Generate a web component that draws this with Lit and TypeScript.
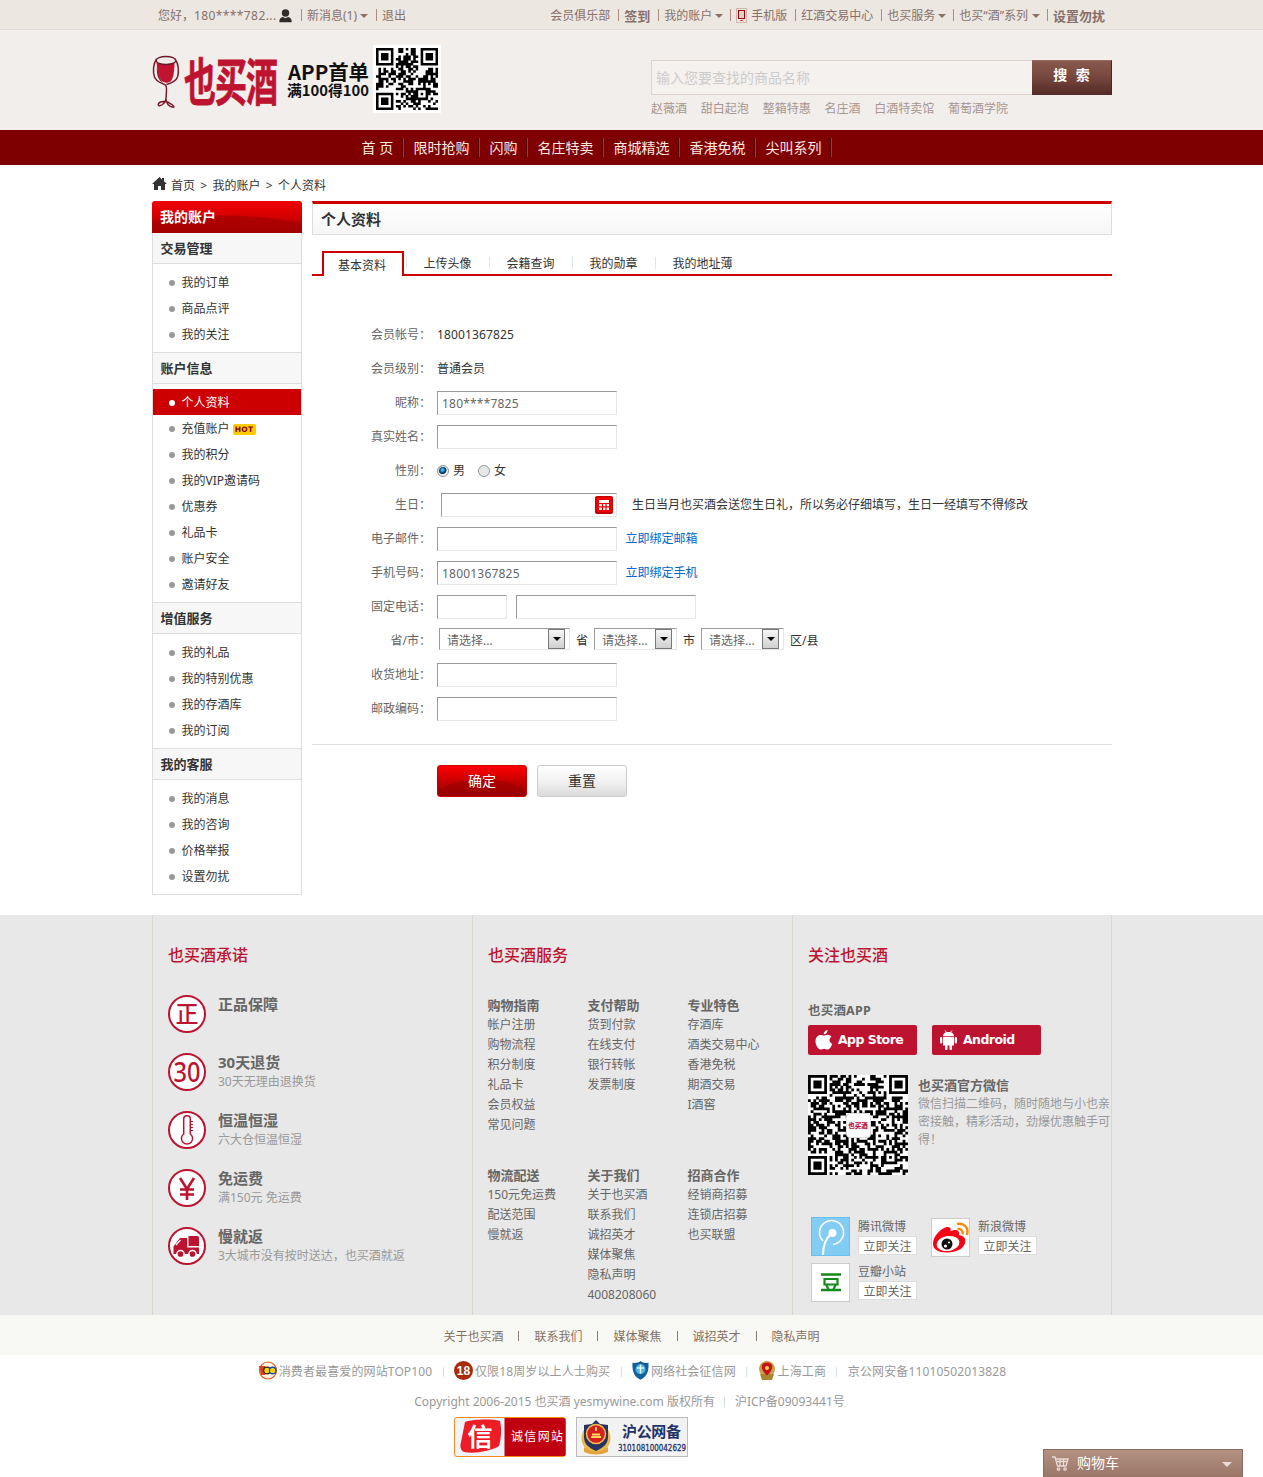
import { LitElement, html, css, svg } from "lit";
import { customElement, property } from "lit/decorators.js";
import { classMap } from "lit/directives/class-map.js";

const FONT = css`"Noto Sans", "Noto Sans CJK SC", sans-serif`;

@customElement("qr-code")
class QrCode extends LitElement {
  @property({ type: Number }) modules = 25;
  @property({ type: Number }) seed = 7;
  static styles = css`
    :host { display: block; }
    svg { display: block; width: 100%; height: 100%; }
  `;
  render() {
    const n = this.modules;
    let s = this.seed;
    const rand = () => {
      s = (s * 1103515245 + 12345) % 2147483648;
      return s / 2147483648;
    };
    const finder = (x: number, y: number) => {
      for (const [fx, fy] of [[0, 0], [n - 7, 0], [0, n - 7]]) {
        const dx = x - fx, dy = y - fy;
        if (dx >= -1 && dx <= 7 && dy >= -1 && dy <= 7) {
          const d = Math.max(Math.abs(dx - 3), Math.abs(dy - 3));
          return d <= 1 || d === 3 ? 1 : 0;
        }
      }
      const d = Math.max(Math.abs(x - (n - 7)), Math.abs(y - (n - 7)));
      if (d <= 2) return d === 1 ? 0 : 1;
      return -1;
    };
    let d = "";
    for (let y = 0; y < n; y++)
      for (let x = 0; x < n; x++) {
        const f = finder(x, y);
        const r = rand();
        if (f === 1 || (f === -1 && r > 0.5)) d += `M${x} ${y}h1.03v1.03h-1.03z`;
      }
    return html`<svg viewBox="0 0 ${n} ${n}"><path d=${d} fill="#000" /></svg>`;
  }
}

const caret = html`<i class="caret"></i>`;

const userIcon = html`<svg class="user" width="13" height="14" viewBox="0 0 13 14" fill="#2f2b29">
  <circle cx="6.5" cy="4" r="3.7" /><path d="M.4 13.200V11.500C.8 9 2.500 8.200 4 8l2.500 1.300L9 8c1.500.2 3.200 1 3.600 3.500v1.700z" /></svg>`;

const phoneIcon = html`<svg class="phone" width="11" height="15" viewBox="0 0 11 15">
  <rect x=".5" y=".5" width="10" height="14" fill="#efe5e0" stroke="#d3b5ab" />
  <rect x="2.500" y="2.500" width="6" height="8" fill="#d5d5d5" stroke="#a00000" /><rect x="4.500" y="12" width="2" height="1" fill="#c00" /></svg>`;

const glass = html`<svg class="glass" width="28" height="54" viewBox="0 0 28 54" fill="none">
  <path d="M4.500 7c5 3 13 3 18-.5 0 7-.5 14-2.500 18-2 4-8 4.500-11 .5C6 20 5 14 4.500 7z" fill="#c01430" />
  <path d="M5 11c1 8 3 13 6 17-4-2-7-8-6-17z" fill="#8c0d22" />
  <ellipse cx="14" cy="5.500" rx="9.800" ry="4" stroke="#6b1a2b" stroke-width="1.300" />
  <path d="M6 7c4-3 12-3 16 0" stroke="#f7dfe2" stroke-width="1.200" />
  <path d="M4.500 4C1 9 .8 17 2.500 22c2 5 7 6 10 7.500 3 1 2 5 1.800 9-.2 5 .2 8-3.800 11-3 2-5 1.500-4-.8 2-3 9-2.600 12 0 3 1.800 4.500 3.500 2.500 3.500-4-.5-7-4.200-7-8" stroke="#7a1a2d" stroke-width="1.500" />
  <path d="M23 4c4 5 4 13 2.500 18-1.500 4-5.500 6-11 7.500" stroke="#7a1a2d" stroke-width="1.500" />
</svg>`;

const rings: Record<string, unknown> = {
  zheng: svg`<text x="19" y="27" font-size="23" font-weight="500" text-anchor="middle" font-family="Noto Sans CJK SC">正</text>`,
  thirty: svg`<text x="5.500" y="29" font-size="27" font-weight="500" font-family="Noto Sans" textLength="27" lengthAdjust="spacingAndGlyphs">30</text>`,
  temp: svg`<path d="M15.700 23V8a3.300 3.300 0 0 1 6.600 0v15a5.600 5.600 0 1 1-6.600 0z" fill="none" stroke="#be1330" stroke-width="1.500"/><path d="M22 10.500h3M22 13.500h3M22 16.500h3M22 19.500h3" stroke="#be1330" stroke-width="1"/>`,
  yen: svg`<path d="M12 9l7 11 7-11M19 20v11M12 20.500h14M12 25.500h14" fill="none" stroke="#be1330" stroke-width="2.600"/>`,
  truck: svg`<path d="M20.500 9h9a1.500 1.500 0 0 1 1.500 1.500v8.500H20.500z"/><path d="M5.500 19.500L12 11h7.200v9.500H31V27H5.500z"/><path d="M8 18l4.500-5" stroke="#fff" stroke-width="1.200"/><g stroke="#fff" stroke-width="1.500"><circle cx="12.500" cy="27" r="3.600"/><circle cx="24.500" cy="27" r="3.600"/></g>`,
};

const sections = [
  { title: "交易管理", items: ["我的订单", "商品点评", "我的关注"] },
  { title: "账户信息", items: ["个人资料", "充值账户", "我的积分", "我的VIP邀请码", "优惠券", "礼品卡", "账户安全", "邀请好友"] },
  { title: "增值服务", items: ["我的礼品", "我的特别优惠", "我的存酒库", "我的订阅"] },
  { title: "我的客服", items: ["我的消息", "我的咨询", "价格举报", "设置勿扰"] },
];

const services = [
  ["购物指南", "帐户注册", "购物流程", "积分制度", "礼品卡", "会员权益", "常见问题"],
  ["支付帮助", "货到付款", "在线支付", "银行转帐", "发票制度"],
  ["专业特色", "存酒库", "酒类交易中心", "香港免税", "期酒交易", "I酒窖"],
  ["物流配送", "150元免运费", "配送范围", "慢就返"],
  ["关于我们", "关于也买酒", "联系我们", "诚招英才", "媒体聚焦", "隐私声明", "4008208060"],
  ["招商合作", "经销商招募", "连锁店招募", "也买联盟"],
];

const promises = [
  ["zheng", "正品保障", ""],
  ["thirty", "30天退货", "30天无理由退换货"],
  ["temp", "恒温恒湿", "六大仓恒温恒湿"],
  ["yen", "免运费", "满150元 免运费"],
  ["truck", "慢就返", "3大城市没有按时送达，也买酒就返"],
];

@customElement("app-root")
class AppRoot extends LitElement {
  static styles = css`
    :host { display: block; position: relative; height: 1477px; overflow: hidden; background: #fff; color: #333;
      font: 12px/20px ${FONT}; white-space: nowrap; }
    * { box-sizing: border-box; }
    svg { display: block; flex: none; overflow: visible; }
    .outer { padding-left: 1px; }
    .wrap { width: 960px; margin: 0 auto; display: flex; }
    .caret { width: 0; height: 0; border: 4px solid transparent; border-top: 4px solid #8b7067; border-bottom: 0; margin: -1px 0 0 3px; }

    .top { height: 30px; background: #ece7e1; border-bottom: 1px solid #e2dcd6; color: #87706a; }
    .top .wrap { justify-content: space-between; height: 29px; padding-top: 1px; }
    .links { display: flex; align-items: center; }
    .links span { display: flex; align-items: center; height: 20px; line-height: 20px; padding: 2px 6px 0 6px; position: relative; }
    .links span + span { border-left: 1px solid transparent; }
    .links span + span::before { content: ""; position: absolute; left: 0; top: 4px; width: 1px; height: 12px; background: #ac8e80; }
    .links .plain { padding-right: 7px; }
    .links b { font-size: 13px; }
    .links .msg { padding-right: 7px; }
    .links .series .caret { margin-left: 4px; }
    .user { margin: 0 2px; }
    .phone { margin: -2px 4px 0 0; }
    .links .hello { width: 148px; }
    .who { font-style: normal; letter-spacing: .4px; }
    .num7 { letter-spacing: .13px; margin-top: -1px; }

    .head { height: 100px; background: #f2eeec; }
    .head .wrap { justify-content: space-between; }
    .brand { display: flex; align-items: flex-start; padding-top: 15px; }
    .glass { margin-top: 10px; }
    .brandname { margin: 2px 0 0 4px; }
    .slogan { margin: 13px 0 0 7px; }
    .qrbox { width: 68px; height: 68px; margin-left: 2px; background: #fff; padding: 3px; }
    .qrbox qr-code { width: 62px; height: 62px; }
    .search { width: 461px; padding-top: 30px; }
    .bar { display: flex; }
    .bar input { width: 381px; height: 35px; border: 1px solid #ddd2cc; border-right: 0; background: #f5f1ef; padding: 0 4px; font: 14px/20px ${FONT}; outline: 0; border-radius: 0; }
    .bar input::placeholder { color: #ccc; opacity: 1; }
    .bar button { width: 80px; height: 35px; border: 0; border-top: 1px solid #9a6b60; border-right: 1px solid #4d2520; padding: 0 0 6px; color: #fff;
      background: linear-gradient(#87584c, #7a4b41 40%, #542a26); font: bold 14px/20px ${FONT}; word-spacing: 5px; }
    .hot { display: flex; gap: 13.8px; margin-top: 4px; color: #a79690; }

    .nav { height: 35px; background: #7f0000; color: #fbe9e4; }
    .nav .wrap { padding-left: 200px; align-items: center; height: 35px; }
    .nav span { font-size: 14px; line-height: 20px; height: 19px; padding: 0 9px 0 9.500px; border-right: 1px solid #a33; box-shadow: inset -1px 0 #530000; width: 76px; }
    .nav .n0 { width: 52px; }
    .nav .n2 { width: 48px; }

    .crumb { display: flex; height: 36px; padding-top: 6px; align-items: center; }
    .crumb svg { margin: -5px 4px 0 0; }
    .crumb i { font-style: normal; width: 17.500px; text-align: center; }
    .body { height: 714px; gap: 10px; align-items: flex-start; }

    .side { width: 150px; }
    .sidehead { height: 32px; line-height: 32px; padding-left: 8px; border-radius: 3px 3px 0 0; color: #fff; font-weight: 700; font-size: 14px;
      background: radial-gradient(ellipse 115px 28px at 70px 42px, #a80000cc 96%, transparent 100%), linear-gradient(#f00000, #d40000 50%, #8e0000); }
    .sidebox { border: 1px solid #ddd; border-top: 0; }
    .sec h4 { margin: 0; height: 32px; line-height: 31px; padding-left: 7.500px; font-size: 13px; background: #f7f7f7; border-top: 1px solid #ddd; border-bottom: 1px solid #ddd; }
    .sec:first-child h4 { border-top: 0; height: 31px; }
    .sec ul { margin: 0; padding: 5px 0; list-style: none; }
    .sec li { height: 26px; line-height: 20px; padding: 2px 0 0 15px; display: flex; align-items: center; }
    .sec li::before { content: ""; width: 6px; height: 6px; border-radius: 50%; background: #999; margin: -1px 7px 0 .5px; }
    .sec li.on { background: #c00; color: #fff; }
    .sec li.on::before { background: #fff; }
    .tag { width: 23px; height: 11px; margin: 1px 0 0 3px; border-radius: 2px; background: #fecb00; color: #800; font: bold 7.500px/11px "DejaVu Sans", sans-serif; text-align: center; letter-spacing: .3px; }

    .main { width: 800px; }
    .title { height: 34px; border: 1px solid #ddd; border-top: 3px solid #c00; background: linear-gradient(#fff, #f6f6f6); padding-left: 8px; margin: 0; font-size: 15px; line-height: 30px; }
    .tabs { display: flex; height: 25px; margin-top: 16px; padding-left: 10px; border-bottom: 2px solid #c00; }
    .tabs span { height: 12px; line-height: 14px; padding: 0 17px 0 16.500px; border-left: 1px solid #dfe8e0; margin-top: 6px; width: 83px; }
    .tabs .on { width: 82px; height: 25px; line-height: 25px; padding: 0 14px; border: 2px solid #c00; border-bottom: 0; background: #fff; margin: 0 2px 0 0; }
    .form { padding: 42px 0 18px; border-bottom: 1px solid #ddd; }
    .row { display: flex; height: 34px; align-items: center; }
    .row label { width: 119px; margin-right: 6px; text-align: right; color: #666; flex: none; }
    .row input { width: 180px; height: 24px; padding: 0 4px; border: 1px solid #e6e6e6; border-top-color: #999; border-left-color: #999; outline: 0; color: #666; font: 12px/18px ${FONT}; letter-spacing: .2px; border-radius: 0; }
    .row a { margin-left: 8.500px; color: #0066cc; }
    .row .short { width: 70px; margin-right: 9px; }
    .date { display: flex; align-items: center; margin: 0 15px 0 4px; }
    .row .date input { width: 176px; margin: 0; }
    .date svg { margin: 0 4px 0 -22px; }
    .radio { width: 12px; height: 12px; border-radius: 50%; border: 1px solid #8f9396; background: radial-gradient(circle, #e8e8e8 30%, #d0d0d0); margin: 0 4px 0 0; box-shadow: inset 0 0 0 1px #f4f4f4; }
    .radio.on { background: radial-gradient(circle at 45% 40%, #4fc3ee 8%, #0b5a92 30%, #07304f 46%, #eee 54%); }
    .gap { margin-left: 13px; }
    .select { display: flex; justify-content: space-between; width: 83px; height: 22px; margin: -4px 6px 0 6px; padding: 0 4px 0 7px; line-height: 23px; border: 1px solid #e6e6e6; border-top-color: #999; border-left-color: #999; color: #666; }
    .select.wide { width: 131px; margin-left: 2px; }
    .select i { width: 17px; height: 20px; border: 1px solid #777; background: linear-gradient(#f6f6f6, #d0d0d0); display: flex; justify-content: center; align-items: center; }
    .select i::before { content: ""; border: 4px solid transparent; border-top-color: #000; border-bottom: 0; }
    .actions { display: flex; gap: 10px; padding: 20px 0 0 125px; }
    .actions button { width: 90px; height: 32px; border-radius: 3px; font: 14px/20px ${FONT}; padding: 0 0 1px; border: 1px solid #ccc; color: #333; background: linear-gradient(#fff, #f2f2f2 50%, #dadada); }
    .actions .ok { color: #fff; border-color: #d00000; background: radial-gradient(ellipse 50px 20px at 44px 33px, #9a000099 95%, transparent), linear-gradient(#ff0000, #c80000 50%, #940000); }

    .foot { background: #e8e8e8; height: 400px; color: #666; }
    .foot .wrap { height: 400px; border-right: 1px solid #d8d8cf; }
    .col { width: 320px; border-left: 1px solid #d8d8cf; padding: 28px 0 0 15px; flex: none; }
    .col h3 { margin: 0; font: 500 16px/24px ${FONT}; color: #be1330; }
    .plist { padding-top: 28px; }
    .prom { display: flex; height: 58px; gap: 12px; }
    .prom b { display: block; font-size: 15px; line-height: 20px; height: 20px; margin-top: -1px; }
    .prom p { margin: 0; line-height: 20px; color: #999; }
    .svc { display: grid; grid-template-columns: repeat(3, 100px); grid-template-rows: 170px auto; padding-top: 28px; margin-left: -.5px; }
    .svc b { font-size: 13px; height: 20px; display: block; line-height: 20px; }
    .svc p { margin: 0; height: 20px; }
    .app { margin-top: 33px; font-weight: 700; font-size: 12.500px; height: 20px; line-height: 21px; letter-spacing: .2px; }
    .stores { display: flex; gap: 15px; margin-top: 5px; }
    .store { width: 109px; height: 30px; border-radius: 2px; background: #be1330; color: #fff; display: flex; align-items: center; padding-left: 7px; gap: 5px; font: bold 12.500px/30px "DejaVu Sans", sans-serif; letter-spacing: -.55px; }
    .wx { display: flex; margin-top: 20px; gap: 10px; white-space: normal; }
    .wx .pic { width: 100px; height: 100px; background: #fff; flex: none; display: grid; }
    .wx qr-code { grid-area: 1 / 1; }
    .mini { grid-area: 1 / 1; place-self: center; width: 25px; height: 25px; background: #fff; border-radius: 4px; border: 1px solid #ddd; font: 900 6.500px/23px "Noto Sans CJK SC", sans-serif; color: #be1330; display: flex; align-items: center; justify-content: center; z-index: 1; white-space: nowrap; }
    .wx b { display: block; font-size: 13px; line-height: 20px; }
    .wx p { margin: 0; width: 194px; line-height: 18px; height: 54px; color: #999; }
    .social { display: grid; grid-template-columns: 120px 120px; grid-template-rows: 46px 46px; margin: 42px 0 0 3px; }
    .soc { display: flex; gap: 8px; height: 39px; }
    .soc .t { line-height: 20px; height: 19px; }
    .soc .f { width: 59px; height: 19px; line-height: 19px; text-align: center; background: #fff; border: 1px solid #ddd; }
    .soc.db .txt { margin-top: -1px; }
    .soc.sina svg { margin-top: 1px; }

    .strip { height: 40px; background: #f8f8f4; color: #86705f; display: flex; justify-content: center; align-items: center; gap: 15px; padding: 4px 0 0 0; }
    .strip i { width: 1px; height: 10px; background: #8c7d74; margin-top: -2px; }
    .cert { display: flex; height: 32px; align-items: center; justify-content: center; color: #999; padding: 1px 0 0 2px; }
    .cert i { width: 1px; height: 10px; background: #d5e2e2; margin: 0 10.4px; }
    .cert svg { margin: -2px 2px 0 0; }
    .cert span { letter-spacing: .12px; }
    .copy { display: flex; height: 30px; align-items: center; justify-content: center; color: #999; padding: 0 4px 0 0; }
    .copy i { width: 1px; height: 10px; background: #cfdcdc; margin: 0 9.500px; }
    .badges { display: flex; gap: 10px; justify-content: center; padding-right: 121px; }
    .cart { position: absolute; left: 1043px; top: 1449px; width: 200px; height: 28px; display: flex; align-items: center; padding: 0 10px 0 8px; color: #fff; font-size: 14px; background: linear-gradient(#b39183, #9a7668); border: 1px solid #8d6b5e; border-bottom: 0; }
    .cart span { flex: 1; padding: 0 0 2px 8px; }
    .cart i { border: 5px solid transparent; border-top-color: #e9dcd6; border-bottom: 0; margin-top: 2px; }
  `;

  private row(label: string, content: unknown) {
    return html`<div class="row"><label>${label}：</label>${content}</div>`;
  }

  render() {
    return html`
      <div class="top outer"><div class="wrap">
        <div class="links"><span class="hello">您好，<em class="who">180****782...</em>${userIcon}</span><span class="msg">新消息(1)${caret}</span><span>退出</span></div>
        <div class="links"><span class="plain">会员俱乐部</span><span class="plain"><b>签到</b></span><span>我的账户${caret}</span><span class="plain">${phoneIcon}手机版</span><span class="plain">红酒交易中心</span><span>也买服务${caret}</span><span class="series">也买“酒”系列${caret}</span><span class="plain"><b>设置勿扰</b></span></div>
      </div></div>

      <div class="head outer"><div class="wrap">
        <div class="brand">${glass}
          <svg class="brandname" width="96" height="70" viewBox="0 0 96 70" fill="#be1330" font-family="Noto Sans CJK SC" font-weight="700">
            <text transform="translate(0 54) scale(1 1.600)" font-size="32" textLength="94" stroke="#be1330" stroke-width=".5">也买酒</text></svg>
          <svg class="slogan" width="84" height="50" viewBox="0 0 84 50" fill="#111" font-family="Noto Sans CJK SC" font-weight="700">
            <text x="1" y="21.500" font-size="20" textLength="81" lengthAdjust="spacingAndGlyphs">APP首单</text>
            <text x="0" y="38" font-size="15" textLength="82" lengthAdjust="spacingAndGlyphs">满100得100</text></svg>
          <div class="qrbox"><qr-code modules="25" seed="11"></qr-code></div>
        </div>
        <div class="search">
          <div class="bar"><input placeholder="输入您要查找的商品名称" /><button>搜 索</button></div>
          <div class="hot">${["赵薇酒", "甜白起泡", "整箱特惠", "名庄酒", "白酒特卖馆", "葡萄酒学院"].map((t) => html`<span>${t}</span>`)}</div>
        </div>
      </div></div>

      <div class="nav outer"><div class="wrap">
        ${["首 页", "限时抢购", "闪购", "名庄特卖", "商城精选", "香港免税", "尖叫系列"].map((t, i) => html`<span class="n${i}">${t}</span>`)}
      </div></div>

      <div class="outer"><div class="wrap crumb">
        <svg width="15" height="13" viewBox="0 0 15 13" fill="#333"><path d="M7.500 0L0 7h2v6h4V9h3v4h4V7h2l-3-2.800V1h-2v1.400z" /></svg>
        首页<i>&gt;</i>我的账户<i>&gt;</i>个人资料
      </div></div>

      <div class="outer"><div class="wrap body">
        <div class="side">
          <div class="sidehead">我的账户</div>
          <div class="sidebox">${sections.map((s) => html`<div class="sec"><h4>${s.title}</h4><ul>
            ${s.items.map((t) => html`<li class=${classMap({ on: t === "个人资料" })}>${t}${t === "充值账户" ? html`<span class="tag">HOT</span>` : ""}</li>`)}
          </ul></div>`)}</div>
        </div>
        <div class="main">
          <h2 class="title">个人资料</h2>
          <div class="tabs"><span class="on">基本资料</span><span>上传头像</span><span>会籍查询</span><span>我的勋章</span><span>我的地址薄</span></div>
          <div class="form">
            ${this.row("会员帐号", html`<span class="num7">18001367825</span>`)}
            ${this.row("会员级别", "普通会员")}
            ${this.row("昵称", html`<input .value=${"180****7825"} />`)}
            ${this.row("真实姓名", html`<input />`)}
            ${this.row("性别", html`<i class="radio on"></i>男<i class="radio gap"></i>女`)}
            ${this.row("生日", html`<div class="date"><input /><svg width="18" height="18" viewBox="0 0 18 18"><rect width="18" height="18" rx="2" fill="#c40000" /><rect x="1" y="1" width="16" height="15" rx="1.500" fill="#f00000" /><path d="M4 4h10v10H4z" fill="#fff" /><path d="M4 7.500h10M7.500 8v6M11 8v6M4 10.800h10" stroke="#e00000" stroke-width="1.200" /></svg></div>生日当月也买酒会送您生日礼，所以务必仔细填写，生日一经填写不得修改`)}
            ${this.row("电子邮件", html`<input /><a>立即绑定邮箱</a>`)}
            ${this.row("手机号码", html`<input .value=${"18001367825"} /><a>立即绑定手机</a>`)}
            ${this.row("固定电话", html`<input class="short" /><input />`)}
            ${this.row("省/市", html`<div class="select wide">请选择...<i></i></div>省<div class="select">请选择...<i></i></div>市<div class="select">请选择...<i></i></div>区/县`)}
            ${this.row("收货地址", html`<input />`)}
            ${this.row("邮政编码", html`<input />`)}
          </div>
          <div class="actions"><button class="ok">确定</button><button>重置</button></div>
        </div>
      </div></div>

      <div class="foot outer"><div class="wrap">
        <div class="col"><h3>也买酒承诺</h3><div class="plist">
          ${promises.map(([k, a, b]) => html`<div class="prom"><svg width="38" height="38" viewBox="0 0 38 38" fill="#be1330"><circle cx="19" cy="19" r="18" fill="#fff" stroke="#be1330" stroke-width="2" />${rings[k]}</svg><div><b>${a}</b><p>${b}</p></div></div>`)}
        </div></div>
        <div class="col"><h3>也买酒服务</h3><div class="svc">
          ${services.map(([h, ...r]) => html`<div><b>${h}</b>${r.map((t) => html`<p>${t}</p>`)}</div>`)}
        </div></div>
        <div class="col"><h3>关注也买酒</h3>
          <div class="app">也买酒APP</div>
          <div class="stores">
            <div class="store"><svg width="18" height="20" viewBox="0 0 18 20" fill="#fff"><path d="M12.500 0c.2 2-1.600 4.400-3.800 4.300C8.500 2.300 10.500.3 12.500 0zM9 5.600c1 0 2-.9 3.700-.9 1.600 0 3 .9 3.800 2-3 1.900-2.500 5.700.8 7-.9 2.700-2.700 5.800-4.600 5.800-1.300 0-1.900-.8-3.500-.8s-2.200.8-3.500.8C3.200 19.500.5 15 .5 11.200.5 7.300 3 4.900 5.500 4.900c1.500 0 2.500.7 3.500.7z" /></svg>App Store</div>
            <div class="store"><svg width="19" height="20" viewBox="0 0 19 20" fill="#fff"><path d="M4 6.200C4 3.500 6.300 2 9.500 2S15 3.500 15 6.200zM4 7h11v8.500H4z" /><path d="M6 .5l1.500 2M13 .5l-1.500 2" stroke="#fff" /><rect x="1" y="7" width="2.300" height="6.500" rx="1.100" /><rect x="15.700" y="7" width="2.300" height="6.500" rx="1.100" /><rect x="6" y="14" width="2.500" height="6" rx="1.100" /><rect x="10.500" y="14" width="2.500" height="6" rx="1.100" /></svg>Android</div>
          </div>
          <div class="wx"><div class="pic"><qr-code modules="37" seed="29"></qr-code><div class="mini">也买酒</div></div>
            <div><b>也买酒官方微信</b><p>微信扫描二维码，随时随地与小也亲密接触，精彩活动，劲爆优惠触手可得！</p></div></div>
          <div class="social">
            <div class="soc"><svg width="39" height="39" viewBox="0 0 39 39"><rect x=".5" y=".5" width="38" height="38" fill="#83cdf5" stroke="#6bbfee" /><g fill="none" stroke="#fff"><path d="M12 24A12 12 0 1 1 22 27.500" stroke-width="1.600" /><path d="M21 16C15 21 12 28 12 38" stroke-width="2" /></g><circle cx="21.500" cy="16" r="4" fill="#fff" /></svg><div class="txt"><div class="t">腾讯微博</div><div class="f">立即关注</div></div></div>
            <div class="soc sina"><svg width="39" height="39" viewBox="0 0 39 39"><rect x=".5" y=".5" width="38" height="38" fill="#fff" stroke="#ccc" /><path d="M2 26C2 18 10 10 16 9c4-.5 4 3 3.500 4.500C24 11 29 11.500 28 17c5 1 7 3 6 8-1.500 6-9 9.500-18 9.500S2 31 2 26z" fill="#fa0014" /><ellipse cx="17" cy="25.500" rx="11.500" ry="7.500" fill="#fff" transform="rotate(-8 17 25.500)" /><circle cx="16" cy="26" r="5.500" fill="#111" /><circle cx="14.500" cy="28" r="1.600" fill="#fff" /><circle cx="18" cy="24.500" r="1" fill="#fff" /><path d="M26 6c7-1.500 12 4 10 11M26.500 11c3.500-.6 6 2 5 5.500" fill="none" stroke="#ff8a00" stroke-width="2.400" /></svg><div class="txt"><div class="t">新浪微博</div><div class="f">立即关注</div></div></div>
            <div class="soc db"><svg width="39" height="39" viewBox="0 0 39 39"><rect x=".5" y=".5" width="38" height="38" fill="#fff" stroke="#ccc" /><path d="M10 11.500h20M10 27h20" stroke="#138a1a" stroke-width="2.600" /><path d="M13.500 16h13v5.500h-13zM15.500 22l2 4.500M24.500 22l-2 4.500" fill="none" stroke="#138a1a" stroke-width="2.200" /></svg><div class="txt"><div class="t">豆瓣小站</div><div class="f">立即关注</div></div></div>
          </div>
        </div>
      </div></div>

      <div class="strip"><span>关于也买酒</span><i></i><span>联系我们</span><i></i><span>媒体聚焦</span><i></i><span>诚招英才</span><i></i><span>隐私声明</span></div>
      <div class="cert">
        <svg width="18" height="19" viewBox="0 0 18 19"><circle cx="9" cy="9.500" r="8.500" fill="#fff3df" stroke="#e8632a" stroke-width="1.200" /><path d="M0 5h6v9H2z" fill="#d8401c" /><circle cx="8" cy="9.500" r="3.300" fill="#ffd400" stroke="#222" stroke-width="1.200" /><circle cx="13.700" cy="9.500" r="3.300" fill="#ffd400" stroke="#1c4d9c" stroke-width="1.400" /></svg><span>消费者最喜爱的网站TOP100</span><i></i>
        <svg width="19" height="19" viewBox="0 0 19 19"><circle cx="9.500" cy="9.500" r="9.500" fill="#a92b0a" /><text x="9.500" y="13.800" font-size="12" font-weight="700" fill="#fff" text-anchor="middle" font-family="Liberation Sans">18</text></svg><span>仅限18周岁以上人士购买</span><i></i>
        <svg width="17" height="19" viewBox="0 0 17 19"><path d="M8.500 0c2 1.800 5 2.200 8 1.800C17 10 15 16 8.500 18.700 2 16 0 10 .5 1.800c3 .4 6 0 8-1.800z" fill="#14609c" /><circle cx="8.500" cy="8.300" r="5" fill="#4db5e0" /><path d="M8.500 3.500v9M5 7h7" stroke="#e9f9d9" stroke-width="1.500" /></svg><span>网络社会征信网</span><i></i>
        <svg width="18" height="19" viewBox="0 0 18 19"><circle cx="9" cy="8" r="8" fill="#c9a04c" /><path d="M2 13h14l-2 6H4z" fill="#a8862f" /><path d="M9 1.500c7 0 7 7 0 13-7-6-7-13 0-13z" fill="#c4141a" /><circle cx="9" cy="7" r="2" fill="#f5cf52" /></svg><span>上海工商</span><i></i><span>京公网安备11010502013828</span>
      </div>
      <div class="copy">Copyright 2006-2015 也买酒 yesmywine.com 版权所有<i></i>沪ICP备09093441号</div>
      <div class="badges">
        <svg width="112" height="40" viewBox="0 0 112 40" font-family="Noto Sans CJK SC"><rect x=".5" y=".5" width="111" height="39" rx="2.500" fill="#eef4fc" stroke="#f68a1c" /><path d="M50.500 1H110a1.500 1.500 0 0 1 1.500 1.500v35A1.500 1.500 0 0 1 110 39H50.500z" fill="#c00010" /><path d="M11 5C20 2 38 2 46 4c2 8 1 19-1 25-8 5-24 8-35 6-4-2-4-6-3-10z" fill="#ee1c25" /><text x="13.500" y="29" font-size="25" font-weight="700" fill="#fff">信</text><text x="57" y="24" font-size="12" fill="#fff" textLength="52">诚信网站</text></svg>
        <svg width="112" height="40" viewBox="0 0 112 40"><rect x=".5" y=".5" width="111" height="39" fill="#f2f2f2" stroke="#bbb" /><circle cx="20" cy="21" r="14.500" fill="#e8b64c" /><path d="M20 3l4 4 8 1v12c0 7-5 11-12 14C13 31 8 27 8 20V8l8-1z" fill="#26325f" /><circle cx="20" cy="17" r="9.500" fill="#d61f1f" stroke="#f2c14c" stroke-width="1.500" /><path d="M15 20h10M16 17.500h8M20 10v4" stroke="#ffd95c" stroke-width="1.800" /><path d="M8 30q12 9 24 0v5q-12 5-24 0z" fill="#e3a338" /><text x="46" y="20" font-family="Noto Sans CJK SC" font-weight="700" font-size="15" fill="#1f3269" textLength="59">沪公网备</text><text x="42" y="34" font-family="DejaVu Sans" font-size="9" fill="#1f3269" stroke="#1f3269" stroke-width=".3" textLength="68" lengthAdjust="spacingAndGlyphs">310108100042629</text></svg>
      </div>

      <div class="cart"><svg width="17" height="15" viewBox="0 0 17 15" fill="none" stroke="#e9dcd6" stroke-width="1.300"><path d="M0 1h3l2.500 9H14l2-7H4M5 5.500h10M8 3.500v6M11.500 3.500v6" /><circle cx="6.500" cy="13" r="1.200" /><circle cx="13" cy="13" r="1.200" /></svg><span>购物车</span><i></i></div>
    `;
  }
}
